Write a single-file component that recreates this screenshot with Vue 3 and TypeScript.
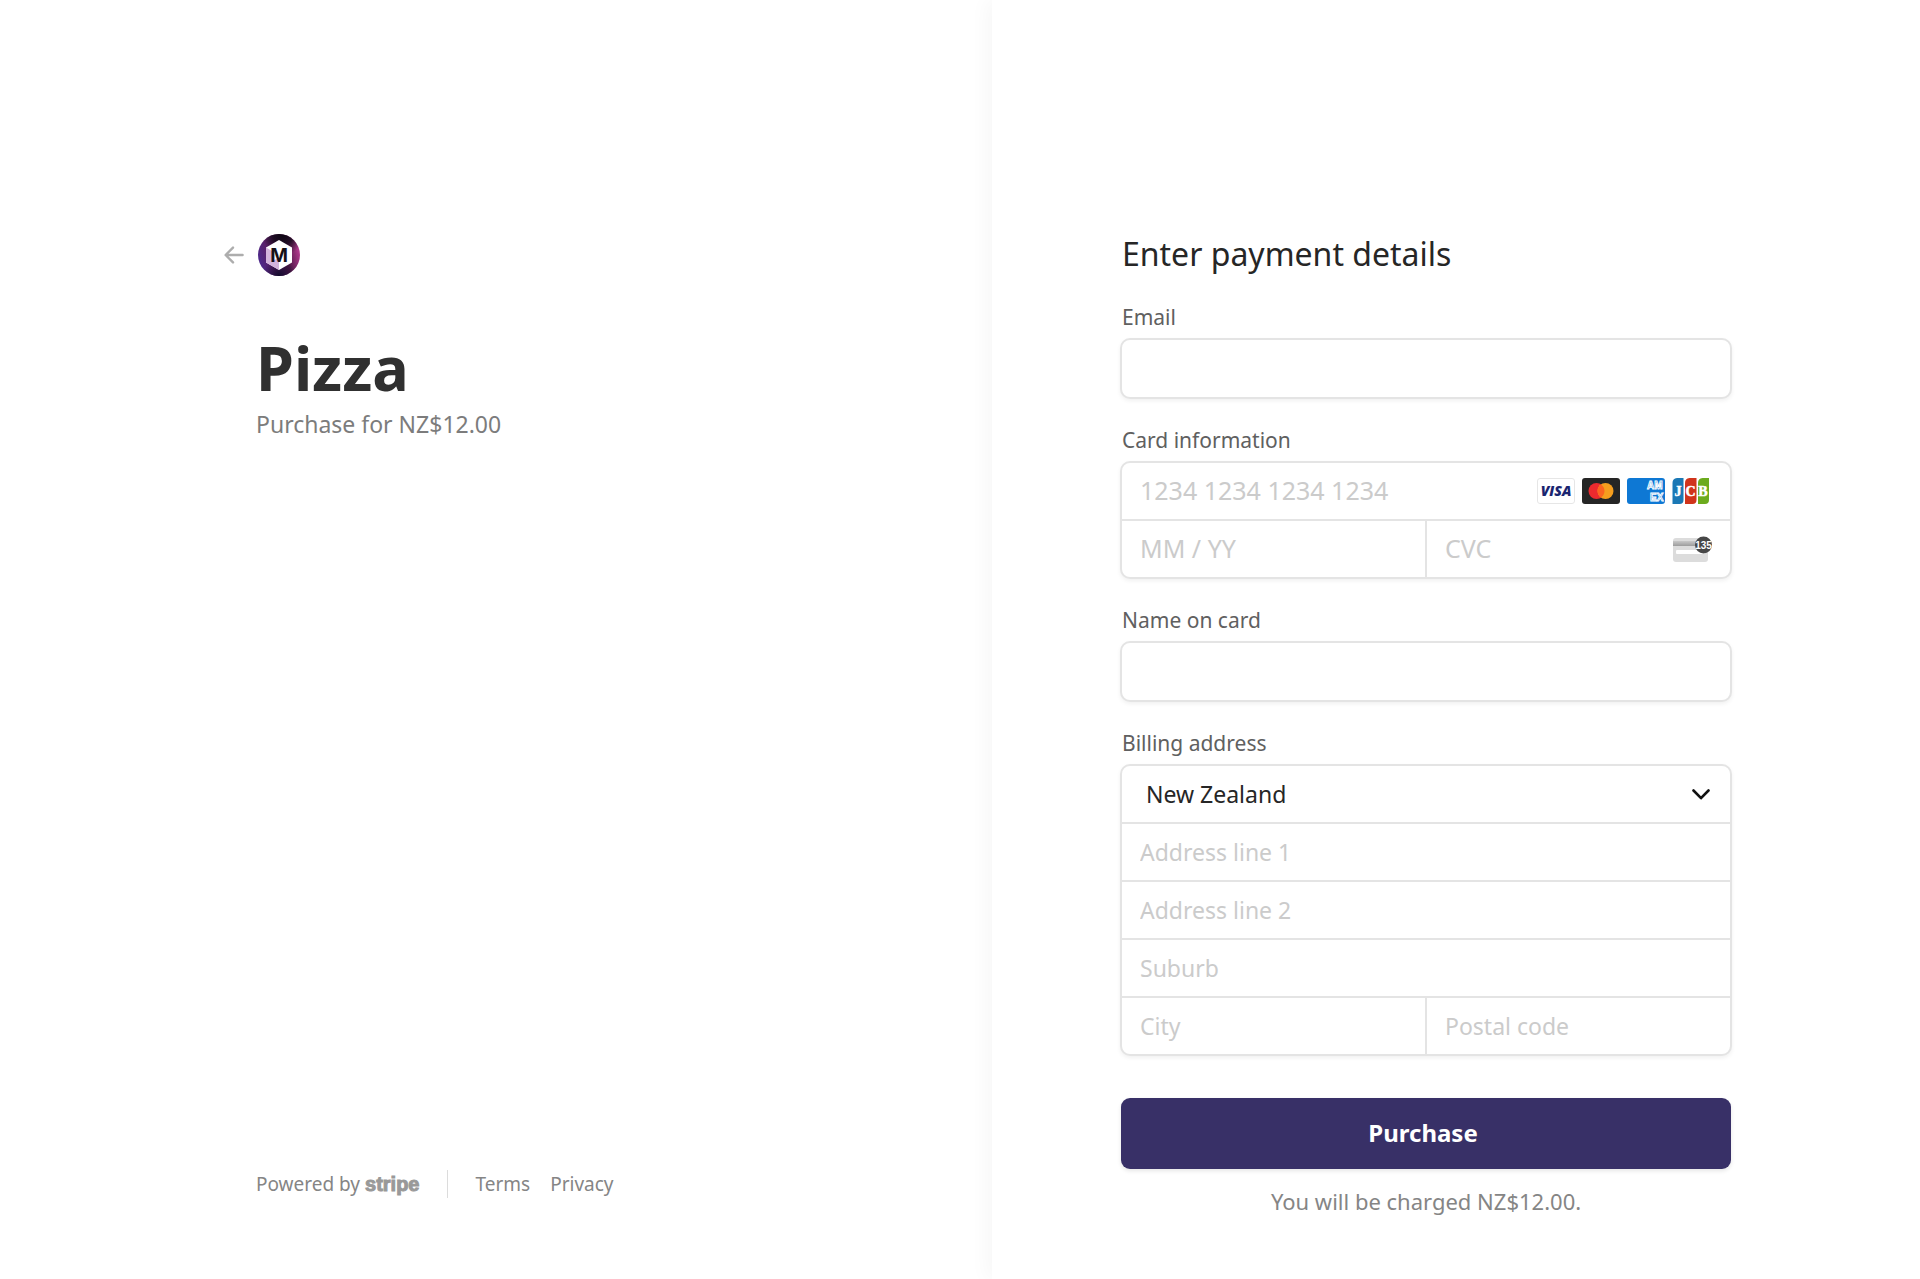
<script setup lang="ts">
import { ref } from 'vue'

interface AddressLine {
  id: string
  label: string
}

const email = ref('')
const cardNumber = ref('')
const expiry = ref('')
const cvc = ref('')
const cardName = ref('')
const country = ref('NZ')

const countries = [
  { code: 'NZ', name: 'New Zealand' },
  { code: 'AU', name: 'Australia' },
]

const addressLines: AddressLine[] = [
  { id: 'line1', label: 'Address line 1' },
  { id: 'line2', label: 'Address line 2' },
  { id: 'suburb', label: 'Suburb' },
]
const townFields: AddressLine[] = [
  { id: 'city', label: 'City' },
  { id: 'postal', label: 'Postal code' },
]
const address = ref<Record<string, string>>({ line1: '', line2: '', suburb: '', city: '', postal: '' })
</script>

<template>
  <div class="checkout">
    <section class="summary">
      <header class="brand">
        <a class="back" href="#" aria-label="Back">
          <svg width="20" height="18" viewBox="0 0 20 18" fill="none" stroke="#adadad" stroke-width="2.4" stroke-linecap="round" stroke-linejoin="round">
            <path d="M9 1.6 1.6 9 9 16.4M2 9H18.6" />
          </svg>
        </a>
        <svg class="logo" width="42" height="42" viewBox="0 0 42 42" role="img" aria-label="Merchant logo">
          <defs>
            <linearGradient id="disc" x1="0" y1="0.7" x2="1" y2="0.4">
              <stop offset="0" stop-color="#4b2a90" />
              <stop offset="0.3" stop-color="#5a2068" />
              <stop offset="0.65" stop-color="#4a1644" />
              <stop offset="1" stop-color="#b83c92" />
            </linearGradient>
            <radialGradient id="top" cx="0.6" cy="0" r="0.5">
              <stop offset="0" stop-color="#0c0612" />
              <stop offset="0.5" stop-color="#150a1c" stop-opacity="0.85" />
              <stop offset="1" stop-color="#150a1c" stop-opacity="0" />
            </radialGradient>
            <radialGradient id="bottom" cx="0.5" cy="1" r="0.4">
              <stop offset="0" stop-color="#110a2c" />
              <stop offset="1" stop-color="#110a2c" stop-opacity="0" />
            </radialGradient>
          </defs>
          <circle cx="21" cy="21" r="21" fill="url(#disc)" />
          <circle cx="21" cy="21" r="21" fill="url(#top)" />
          <circle cx="21" cy="21" r="21" fill="url(#bottom)" />
          <path d="M21 6 34 13.5V28.500L21 36 8 28.500V13.500Z" fill="#fff" />
          <path d="M8 13.500 14 17V27L21 24V36L8 28.500Z" fill="#d3b4dc" />
          <text x="21" y="28" text-anchor="middle" font-family="Inter, sans-serif" font-weight="700" font-size="19" fill="#161018">M</text>
        </svg>
      </header>

      <h1 class="product">Pizza</h1>
      <p class="price">Purchase for NZ$12.00</p>

      <footer class="legal">
        <a class="powered" href="#">Powered by <span class="stripe">stripe</span></a>
        <nav class="links">
          <a href="#">Terms</a>
          <a href="#">Privacy</a>
        </nav>
      </footer>
    </section>

    <main class="payment">
      <form class="form" @submit.prevent>
        <h2 class="heading">Enter payment details</h2>

        <div class="field">
          <label for="email">Email</label>
          <div class="box single">
            <input id="email" v-model="email" type="email" />
          </div>
        </div>

        <div class="field">
          <label for="card">Card information</label>
          <div class="box card">
            <div class="row">
              <input id="card" v-model="cardNumber" type="text" placeholder="1234 1234 1234 1234" />
              <div class="brands">
                <svg width="38" height="26" viewBox="0 0 38 26" role="img" aria-label="Visa">
                  <rect x="0.500" y="0.500" width="37" height="25" rx="2.500" fill="#fff" stroke="#e6e6e6" />
                  <text x="19" y="18" text-anchor="middle" font-family="Open Sans, sans-serif" font-style="italic" font-weight="800" font-size="14" fill="#1a2570">VISA</text>
                </svg>
                <svg width="38" height="26" viewBox="0 0 38 26" role="img" aria-label="Mastercard">
                  <rect width="38" height="26" rx="3" fill="#252525" />
                  <circle cx="14.500" cy="13" r="8" fill="#eb2a2e" />
                  <circle cx="23.500" cy="13" r="8" fill="#f69e1e" />
                  <path d="M19 6.400a8 8 0 0 1 0 13.200 8 8 0 0 1 0-13.200Z" fill="#fb6420" />
                </svg>
                <svg width="38" height="26" viewBox="0 0 38 26" role="img" aria-label="American Express">
                  <rect width="38" height="26" rx="3" fill="#0e78d4" />
                  <g font-family="Liberation Sans, sans-serif" font-weight="700" font-size="10" fill="#0e78d4" stroke="#fff" stroke-width="0.900">
                    <text x="20" y="11">AM</text>
                    <text x="23" y="23">EX</text>
                  </g>
                </svg>
                <svg width="38" height="26" viewBox="0 0 38 26" role="img" aria-label="JCB">
                  <path d="M5 0H11.500V22a4 4 0 0 1-4 4H0.500V5a5 5 0 0 1 4.500-5Z" fill="#1a78b5" />
                  <path d="M17.500 0H24.500V22a4 4 0 0 1-4 4H13V5a5 5 0 0 1 4.500-5Z" fill="#d0341b" />
                  <path d="M30.500 0H37V22a4 4 0 0 1-4 4H26V5a5 5 0 0 1 4.500-5Z" fill="#6cab1e" />
                  <g font-family="Liberation Serif, serif" font-weight="700" font-size="14" fill="#fff" stroke="#fff" stroke-width="0.500" text-anchor="middle">
                    <text x="6" y="18">J</text>
                    <text x="18.500" y="18">C</text>
                    <text x="31" y="18">B</text>
                  </g>
                </svg>
              </div>
            </div>
            <div class="row split">
              <div class="cell">
                <input v-model="expiry" type="text" placeholder="MM / YY" aria-label="Expiry date" />
              </div>
              <div class="cell">
                <input v-model="cvc" type="text" placeholder="CVC" aria-label="CVC" />
                <svg class="cvc" width="40" height="26" viewBox="0 0 40 26" aria-hidden="true">
                  <defs>
                    <linearGradient id="stripe-fade" x1="0" y1="0" x2="0" y2="1">
                      <stop offset="0" stop-color="#c8c8c8" />
                      <stop offset="1" stop-color="#9c9c9c" />
                    </linearGradient>
                  </defs>
                  <rect y="2" width="35" height="24" rx="3" fill="#dcdcdc" />
                  <rect y="5" width="35" height="5" fill="url(#stripe-fade)" />
                  <rect x="3" y="14" width="29" height="4" rx="1" fill="#fff" />
                  <circle cx="30.500" cy="9" r="8.500" fill="#474747" />
                  <text x="30.500" y="13" text-anchor="middle" font-family="Liberation Sans, sans-serif" font-weight="700" font-size="10" fill="#fff">135</text>
                </svg>
              </div>
            </div>
          </div>
        </div>

        <div class="field">
          <label for="name">Name on card</label>
          <div class="box single">
            <input id="name" v-model="cardName" type="text" />
          </div>
        </div>

        <div class="field">
          <label for="country">Billing address</label>
          <div class="box">
            <div class="row">
              <select id="country" v-model="country">
                <option v-for="c in countries" :key="c.code" :value="c.code">{{ c.name }}</option>
              </select>
              <svg class="chevron" width="18" height="11" viewBox="0 0 18 11" fill="none" stroke="#111" stroke-width="2.600" stroke-linecap="round" stroke-linejoin="round" aria-hidden="true">
                <path d="M1.500 1.500 9 9.200 16.500 1.500" />
              </svg>
            </div>
            <div v-for="line in addressLines" :key="line.id" class="row">
              <input v-model="address[line.id]" type="text" :placeholder="line.label" :aria-label="line.label" />
            </div>
            <div class="row split">
              <div v-for="part in townFields" :key="part.id" class="cell">
                <input v-model="address[part.id]" type="text" :placeholder="part.label" :aria-label="part.label" />
              </div>
            </div>
          </div>
        </div>

        <button class="submit" type="submit">Purchase</button>
        <p class="note">You will be charged NZ$12.00.</p>
      </form>
    </main>
  </div>
</template>

<style>
body {
  margin: 0;
  background: #fff;
}
</style>

<style scoped>
.checkout {
  display: grid;
  grid-template-columns: minmax(0, 31fr) minmax(0, 29fr);
  min-height: 100vh;
  overflow: hidden;
  font-family: "Noto Sans", "Open Sans", sans-serif;
  color: #2b2b2b;
}

.checkout * {
  box-sizing: border-box;
}

a {
  color: inherit;
  text-decoration: none;
}

.summary {
  display: flex;
  flex-direction: column;
  padding: 234px 32px 81px 224px;
}

.brand {
  display: flex;
  align-items: center;
  gap: 14px;
}

.back,
.logo {
  display: block;
}

.back svg {
  display: block;
}

.product {
  margin: 56px 0 0 32px;
  font-size: 61px;
  line-height: 72px;
  font-weight: 700;
  color: #303030;
}

.price {
  margin: 4px 0 0 32px;
  font-size: 23px;
  line-height: 32px;
  color: #7c7c7c;
}

.legal {
  display: flex;
  align-items: center;
  margin-top: auto;
  margin-left: 32px;
  font-size: 19px;
  line-height: 28px;
  color: #858585;
}

.powered {
  padding-right: 28px;
  border-right: 1px solid #dcdcdc;
}

.stripe {
  font-family: "Liberation Sans", sans-serif;
  font-size: 20px;
  font-weight: 700;
  color: #999;
  -webkit-text-stroke: 1px #999;
}

.links {
  display: flex;
  gap: 20px;
  padding-left: 27px;
}

.payment {
  padding: 234px 128px 62px;
  box-shadow: -4px 0 20px rgba(0, 0, 0, 0.04);
}

.form {
  max-width: 612px;
}

.heading {
  margin: 0 0 29px 2px;
  font-size: 32px;
  line-height: 40px;
  font-weight: 400;
  color: #262626;
}

.field {
  margin-bottom: 27px;
}

.field label {
  display: block;
  margin: 0 0 7px 2px;
  font-size: 21px;
  line-height: 28px;
  color: #606060;
}

.box {
  border: 2px solid #e4e4e4;
  border-radius: 10px;
  background: #fff;
  box-shadow: 0 2px 4px rgba(0, 0, 0, 0.06);
  font-size: 23px;
}

.card {
  font-size: 25px;
}

.row {
  display: flex;
  align-items: center;
  height: 56px;
}

.row + .row {
  height: 58px;
  border-top: 2px solid #e4e4e4;
}

.single {
  height: 61px;
}

.cell {
  display: flex;
  flex: 1;
  align-items: center;
  min-width: 0;
  height: 100%;
}

.cell + .cell {
  border-left: 2px solid #e4e4e4;
}

input,
select {
  width: 100%;
  height: 100%;
  min-width: 0;
  padding: 0 18px;
  border: 0;
  border-radius: 8px;
  outline: 0;
  background: transparent;
  font-family: inherit;
  font-size: inherit;
  color: #262626;
}

.card input {
  padding-bottom: 3px;
}

input::placeholder {
  color: #cbcbcb;
  opacity: 1;
}

select {
  appearance: none;
  padding-left: 24px;
}

.brands {
  display: flex;
  gap: 7px;
  padding-right: 20px;
}

.cvc {
  flex: none;
  margin-right: 17px;
}

.chevron {
  flex: none;
  margin-right: 20px;
  pointer-events: none;
}

.submit {
  display: block;
  width: calc(100% - 2px);
  height: 71px;
  margin: 42px 1px 0;
  padding: 0 6px 2px 0;
  border: 0;
  border-radius: 9px;
  background: #383067;
  box-shadow: 0 2px 4px rgba(0, 0, 0, 0.1);
  font-family: inherit;
  font-size: 24px;
  font-weight: 700;
  color: #fff;
}

.note {
  margin: 18px 0 0;
  font-size: 22px;
  line-height: 28px;
  text-align: center;
  color: #858585;
}
</style>
